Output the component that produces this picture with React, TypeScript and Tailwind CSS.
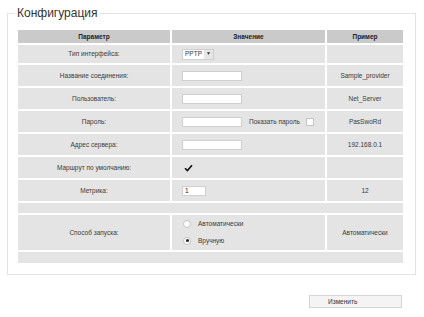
import { useState } from 'react';

function Check() {
  return (
    <svg width="9" height="8" viewBox="0 0 9 8" className="block">
      <path d="M1 4.2 L3.4 6.6 L8 1.2" fill="none" stroke="#111" strokeWidth="1.6" />
    </svg>
  );
}

function Radio({ on }: { on?: boolean }) {
  return (
    <span className="flex h-[8px] w-[8px] items-center justify-center rounded-full border border-[#c4c4c4] bg-white">
      {on && <span className="h-[3px] w-[3px] rounded-full bg-[#222]" />}
    </span>
  );
}

const Box = ({ w, children }: { w: string; children?: React.ReactNode }) => (
  <div className={`${w} flex h-[10px] items-center border border-[#cfcfcf] bg-white pl-[2px] text-[6.5px] text-[#222]`}>
    {children}
  </div>
);

export default function App() {
  const [mode] = useState('manual');

  const rows = [
    { label: 'Название соединения:', value: <Box w="w-[60px]" />, example: 'Sample_provider' },
    { label: 'Пользователь:', value: <Box w="w-[60px]" />, example: 'Net_Server' },
    {
      label: 'Пароль:',
      value: (
        <div className="flex items-center">
          <Box w="w-[60px]" />
          <span className="ml-[7px]">Показать пароль</span>
          <span className="ml-[6px] h-[8px] w-[8px] border border-[#c4c4c4] bg-white" />
        </div>
      ),
      example: 'PasSwoRd',
    },
    { label: 'Адрес сервера:', value: <Box w="w-[60px]" />, example: '192.168.0.1' },
    { label: 'Маршрут по умолчанию:', value: <div className="pl-[2px]"><Check /></div>, example: '' },
    { label: 'Метрика:', value: <Box w="w-[24px]">1</Box>, example: '12' },
  ];

  return (
    <div className="h-[317px] w-[424px] bg-white font-['Liberation_Sans',Arial,sans-serif] text-[#3a3a3a]">
      <fieldset className="ml-[7px] mt-[5px] w-[409px] border border-[#e3e3e3] px-[8px] pb-[9px] pt-[7px]">
        <legend className="-ml-[1px] px-[2px] text-[12px] leading-[16px] text-[#333]">Конфигурация</legend>
        <table className="table-fixed border-separate border-spacing-[2px] text-[6.5px]">
          <thead>
            <tr className="h-[13px] bg-[#cacaca] font-bold text-[#222]">
              <th className="w-[152px] p-0">Параметр</th>
              <th className="w-[153px] p-0">Значение</th>
              <th className="w-[76px] p-0">Пример</th>
            </tr>
          </thead>
          <tbody>
            <tr className="h-[18px]">
              <td className="bg-[#e4e4e4] p-0 text-center">Тип интерфейса:</td>
              <td className="bg-[#e4e4e4] p-0 pl-[10px]">
                <div className="flex h-[11px] w-[32px] items-center border border-[#cfcfcf] bg-white text-[6.5px]">
                  <span className="flex-1 pl-[2px]">PPTP</span>
                  <span className="flex h-full w-[9px] items-center justify-center bg-[#e6e6e6] text-[5px] text-[#333]">▼</span>
                </div>
              </td>
              <td className="bg-[#e4e4e4] p-0" />
            </tr>
            {rows.map((r, i) => (
              <tr key={i} className="h-[21px]">
                <td className="bg-[#e4e4e4] p-0 text-center">{r.label}</td>
                <td className="bg-[#e4e4e4] p-0 pl-[10px]">{r.value}</td>
                <td className="bg-[#e4e4e4] p-0 text-center">{r.example}</td>
              </tr>
            ))}
            <tr className="h-[10px]">
              <td colSpan={3} className="bg-[#e4e4e4] p-0" />
            </tr>
            <tr className="h-[35px]">
              <td className="bg-[#e4e4e4] p-0 text-center">Способ запуска:</td>
              <td className="bg-[#e4e4e4] p-0 pl-[11px]">
                <div className="flex flex-col gap-[7px]">
                  <div className="flex items-center gap-[7px]">
                    <Radio on={mode === 'auto'} />
                    <span>Автоматически</span>
                  </div>
                  <div className="flex items-center gap-[7px]">
                    <Radio on={mode === 'manual'} />
                    <span>Вручную</span>
                  </div>
                </div>
              </td>
              <td className="bg-[#e4e4e4] p-0 text-center">Автоматически</td>
            </tr>
            <tr className="h-[11px]">
              <td colSpan={3} className="bg-[#e4e4e4] p-0" />
            </tr>
          </tbody>
        </table>
      </fieldset>
      <div className="mt-[20px] flex justify-end pr-[22px]">
        <button className="flex h-[13px] w-[93px] items-center border border-[#d6d6d6] bg-[#f4f4f4] pl-[18px] text-[6.5px] text-[#333]">
          Изменить
        </button>
      </div>
    </div>
  );
}
